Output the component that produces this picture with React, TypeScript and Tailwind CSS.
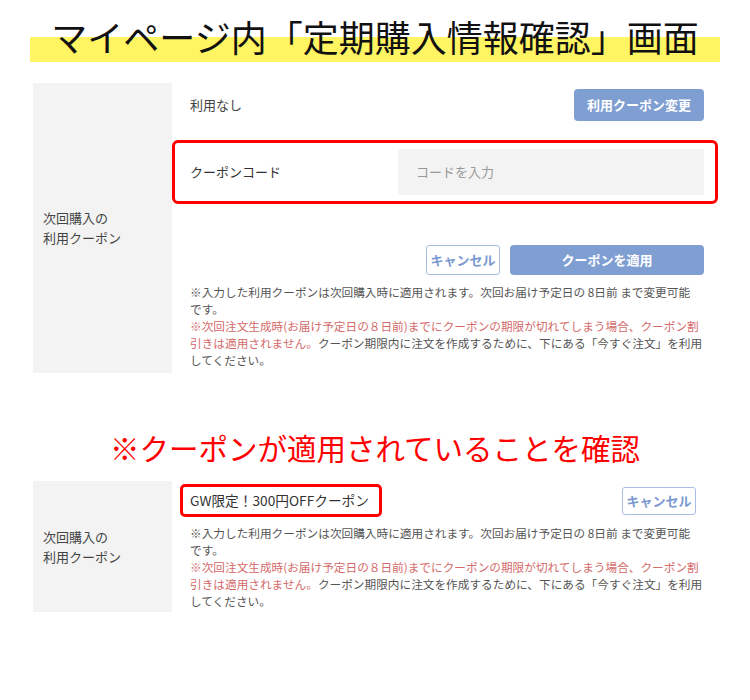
import React from 'react';

const font = { fontFamily: '"Noto Sans CJK JP", "Noto Sans", sans-serif' };

const Notes = () => (
  <div className="text-[11.66px] leading-[17px] text-[#555] whitespace-nowrap">
    <div>※入力した利用クーポンは次回購入時に適用されます。次回お届け予定日の 8日前 まで変更可能</div>
    <div>です。</div>
    <div>
      <span className="text-[#d46a6a]">※次回注文生成時(お届け予定日の８日前)までにクーポンの期限が切れてしまう場合、クーポン割</span>
    </div>
    <div>
      <span className="text-[#d46a6a]">引きは適用されません。</span>クーポン期限内に注文を作成するために、下にある「今すぐ注文」を利用
    </div>
    <div>してください。</div>
  </div>
);

const SideLabel = () => (
  <div className="w-[139px] shrink-0 bg-[#f3f3f3] flex items-center pl-[10px] text-[13px] leading-[20px] text-[#444]">
    <div>
      次回購入の
      <br />
      利用クーポン
    </div>
  </div>
);

const App = () => {
  return (
    <div className="w-[750px] h-[700px] bg-white" style={font}>
      {/* title */}
      <div className="pt-[10px]">
        <div className="ml-[30px] w-[690px] h-[52px] bg-[linear-gradient(to_bottom,transparent_27px,#fff462_27px)] text-center text-[36px] leading-[52px] text-[#111]">
          マイページ内「定期購入情報確認」画面
        </div>
      </div>

      {/* section 1 */}
      <div className="ml-[33px] w-[685px] mt-[21px] flex">
        <SideLabel />
        <div className="flex-1 pt-[6px] pb-[5px]">
          <div className="flex items-center justify-between pl-[18px] pr-[14px]">
            <span className="text-[13px] text-[#444]">利用なし</span>
            <button className="h-[32px] w-[130px] rounded-[4px] bg-[#7f9ed2] text-white text-[13px] font-bold">
              利用クーポン変更
            </button>
          </div>
          <div className="mt-[19px] border-[3px] border-[#ff0000] rounded-[6px] py-[6px] pl-[15px] pr-[11px] flex items-center">
            <span className="w-[208px] text-[13px] text-[#333]">クーポンコード</span>
            <div className="flex-1 h-[46px] bg-[#f3f3f3] flex items-center pl-[18px] text-[13px] text-[#999]">
              コードを入力
            </div>
          </div>
          <div className="mt-[41px] flex justify-end gap-[10px] pr-[14px]">
            <button className="h-[30px] w-[74px] rounded-[3px] border border-[#a8bde6] bg-white text-[#7a98d0] text-[13px] font-bold">
              キャンセル
            </button>
            <button className="h-[30px] w-[194px] rounded-[4px] bg-[#7f9ed2] text-white text-[13px] font-bold">
              クーポンを適用
            </button>
          </div>
          <div className="mt-[8px] pl-[18px]">
            <Notes />
          </div>
        </div>
      </div>

      {/* red title */}
      <div className="mt-[54px] mb-[14px] text-center text-[29.5px] leading-[40px] text-[#ff0000]">
        ※クーポンが適用されていることを確認
      </div>

      {/* section 2 */}
      <div className="ml-[33px] w-[685px] flex">
        <SideLabel />
        <div className="flex-1 pt-[3px] pb-[3px]">
          <div className="flex items-center justify-between pl-[8px] pr-[22px]">
            <div className="border-[3px] border-[#ff0000] rounded-[5px] py-[3px] pl-[7px] pr-[10px] text-[13.7px] leading-[21px] text-[#333]">
              GW限定！300円OFFクーポン
            </div>
            <button className="h-[28px] w-[74px] rounded-[3px] border border-[#a8bde6] bg-white text-[#7a98d0] text-[13px] font-bold">
              キャンセル
            </button>
          </div>
          <div className="mt-[7px] pl-[18px]">
            <Notes />
          </div>
        </div>
      </div>
    </div>
  );
};

export default App;
